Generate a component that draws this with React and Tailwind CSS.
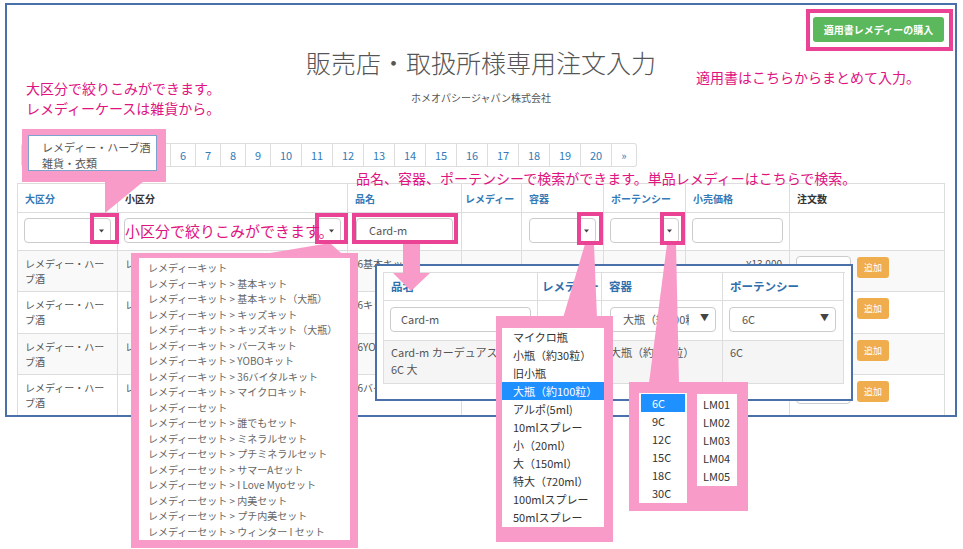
import React from "react";

const headers = [
  { label: "大区分", blue: true },
  { label: "小区分", blue: false },
  { label: "品名", blue: true },
  { label: "レメディー", blue: true },
  { label: "容器", blue: true },
  { label: "ポーテンシー", blue: true },
  { label: "小売価格", blue: true },
  { label: "注文数", blue: false },
];

const rows = [
  { sub: "レメディーキット", name: "36基本キット", price: "¥13,000" },
  { sub: "レメディーキット", name: "36キッズキット", price: "¥13,000" },
  { sub: "レメディーキット", name: "36YOBOキット", price: "¥13,000" },
  { sub: "レメディーキット", name: "36バイタルキット", price: "¥13,000" },
];

const subList = [
  "レメディーキット",
  "レメディーキット > 基本キット",
  "レメディーキット > 基本キット（大瓶）",
  "レメディーキット > キッズキット",
  "レメディーキット > キッズキット（大瓶）",
  "レメディーキット > バースキット",
  "レメディーキット > YOBOキット",
  "レメディーキット > 36バイタルキット",
  "レメディーキット > マイクロキット",
  "レメディーセット",
  "レメディーセット > 誰でもセット",
  "レメディーセット > ミネラルセット",
  "レメディーセット > プチミネラルセット",
  "レメディーセット > サマーAセット",
  "レメディーセット > I Love Myoセット",
  "レメディーセット > 内美セット",
  "レメディーセット > プチ内美セット",
  "レメディーセット > ウィンター I セット",
];

const containers = [
  "マイクロ瓶",
  "小瓶（約30粒）",
  "旧小瓶",
  "大瓶（約100粒）",
  "アルポ(5ml)",
  "10mlスプレー",
  "小（20ml）",
  "大（150ml）",
  "特大（720ml）",
  "100mlスプレー",
  "50mlスプレー",
];

const potencies = ["6C", "9C", "12C", "15C", "18C", "30C"];
const lms = ["LM01", "LM02", "LM03", "LM04", "LM05"];

const pages = ["«", "1", "2", "3", "4", "5", "6", "7", "8", "9", "10", "11", "12", "13", "14", "15", "16", "17", "18", "19", "20", "»"];

function Arrow() {
  return (
    <svg className="absolute right-[6px] top-[10px]" width="5" height="4" viewBox="0 0 5 4">
      <path d="M0 0.5h5L2.5 3.5z" fill="#444" />
    </svg>
  );
}

function Select({ className = "" }) {
  return <div className={`relative h-[25px] rounded-[4px] border border-[#ccc] bg-white ${className}`}><Arrow /></div>;
}

function Pagination() {
  return (
    <div className="ml-[4px] mt-[38px] flex h-[24px]">
      {pages.map((p, i) => (
        <div
          key={p}
          className={`flex h-[24px] items-center justify-center border-y border-r border-[#ddd] text-[11px] text-[#337ab7] ${
            p.length > 1 ? "w-[31px]" : "w-[25px]"
          } ${i === 0 ? "rounded-l-[3px] border-l" : ""} ${i === pages.length - 1 ? "rounded-r-[3px]" : ""}`}
        >
          {p}
        </div>
      ))}
    </div>
  );
}

function MainTable() {
  const cell = "border-b border-r border-[#ddd]";
  return (
    <div className="mt-[16px] grid grid-cols-[100px_230px_114px_60px_82px_82px_104px_155px] border-l border-t border-[#ddd] text-[10px] leading-[15px] text-[#555]">
      {headers.map((h) => (
        <div
          key={h.label}
          className={`${cell} flex h-[29px] items-center overflow-hidden whitespace-nowrap font-bold ${
            h.label === "レメディー" ? "px-[3px]" : "px-[7px]"
          } ${h.blue ? "text-[#337ab7]" : "text-[#333]"}`}
        >
          {h.label}
        </div>
      ))}
      <div className={`${cell} h-[38px] px-[6px] pt-[5px]`}><Select /></div>
      <div className={`${cell} h-[38px] px-[6px] pt-[5px]`}><Select /></div>
      <div className={`${cell} h-[38px] px-[8px] pt-[5px]`}>
        <div className="flex h-[25px] items-center rounded-[4px] border border-[#ccc] bg-white pl-[12px] text-[11px]">Card-m</div>
      </div>
      <div className={`${cell} h-[38px]`} />
      <div className={`${cell} h-[38px] px-[7px] pt-[5px]`}><Select /></div>
      <div className={`${cell} h-[38px] px-[6px] pt-[5px]`}><Select /></div>
      <div className={`${cell} h-[38px] px-[6px] pt-[5px]`}>
        <div className="h-[25px] rounded-[4px] border border-[#ccc] bg-white" />
      </div>
      <div className={`${cell} h-[38px]`} />
      {rows.map((r, i) => {
        const bg = i % 2 === 0 ? "bg-[#f9f9f9]" : "bg-white";
        return (
          <React.Fragment key={i}>
            <div className={`${cell} ${bg} ${i === 1 ? "h-[42px]" : "h-[41px]"} px-[7px] pt-[5px]`}>
              レメディー・ハー
              <br />
              ブ酒
            </div>
            <div className={`${cell} ${bg} whitespace-nowrap px-[7px] pt-[5px]`}>{r.sub}</div>
            <div className={`${cell} ${bg} overflow-hidden whitespace-nowrap px-[4px] pt-[5px]`}>{r.name}</div>
            <div className={`${cell} ${bg}`} />
            <div className={`${cell} ${bg}`} />
            <div className={`${cell} ${bg}`} />
            <div className={`${cell} ${bg} pr-[7px] pt-[5px] text-right`}>{r.price}</div>
            <div className={`${cell} ${bg} flex items-start gap-[6px] pl-[6px] pt-[5px]`}>
              <div className="h-[24px] w-[55px] rounded-[4px] border border-[#ccc] bg-white" />
              <div className="mt-[1px] flex h-[21px] w-[32px] items-center justify-center rounded-[3px] bg-[#f0ad4e] text-[9px] text-white">追加</div>
            </div>
          </React.Fragment>
        );
      })}
    </div>
  );
}

function Inset() {
  const cell = "border-b border-r border-[#ddd]";
  return (
    <div className="absolute left-[375px] top-[264px] h-[137px] w-[478px] border-2 border-[#4a70aa] bg-white px-[6px] pt-[6px]">
      <div className="grid grid-cols-[154px_64px_121px_121px] border-l border-t border-[#ddd] text-[11px] text-[#555]">
        {["品名", "レメディー", "容器", "ポーテンシー"].map((h) => (
          <div
            key={h}
            className={`${cell} flex h-[28px] items-center whitespace-nowrap text-[11.5px] font-bold text-[#2f6fab] ${
              h === "レメディー" ? "px-[4px]" : "px-[7px]"
            }`}
          >
            {h}
          </div>
        ))}
        <div className={`${cell} h-[40px] px-[6px] pt-[6px]`}>
          <div className="flex h-[25px] w-[141px] items-center rounded-[4px] border border-[#ccc] bg-white pl-[10px]">Card-m</div>
        </div>
        <div className={`${cell} h-[40px]`} />
        <div className={`${cell} h-[40px] pl-[8px] pt-[6px]`}>
          <div className="relative flex h-[25px] w-[106px] items-center rounded-[4px] border border-[#ccc] bg-white pl-[12px]">
            <span className="w-[66px] overflow-hidden whitespace-nowrap">大瓶（約100粒）</span>
            <span className="absolute right-[6px] top-[3px] text-[9px] text-[#444]">▼</span>
          </div>
        </div>
        <div className={`${cell} h-[40px] pl-[6px] pt-[6px]`}>
          <div className="relative flex h-[25px] w-[107px] items-center rounded-[4px] border border-[#ccc] bg-white pl-[12px]">
            6C
            <span className="absolute right-[6px] top-[3px] text-[9px] text-[#444]">▼</span>
          </div>
        </div>
        <div className={`${cell} h-[43px] overflow-hidden bg-[#f5f5f5] px-[7px] pt-[3px] leading-[17px]`}>
          <div className="whitespace-nowrap">Card-m カーデュアスマリアヌス</div>
          <div>6C 大</div>
        </div>
        <div className={`${cell} bg-[#f5f5f5]`} />
        <div className={`${cell} bg-[#f5f5f5] px-[8px] pt-[3px] leading-[17px]`}>大瓶（約100粒）</div>
        <div className={`${cell} bg-[#f5f5f5] px-[7px] pt-[3px] leading-[17px]`}>6C</div>
      </div>
    </div>
  );
}

export default function App() {
  const note = "absolute whitespace-nowrap text-[14px] leading-[20px] text-[#e0137f]";
  const outline = "absolute border-[4px] border-[#ea4396]";
  return (
    <div className="relative h-[549px] w-[963px] overflow-hidden bg-white font-['Noto_Sans_CJK_JP','Noto_Sans',sans-serif] text-[#555]">
      <div className="ml-[5px] mt-[3px] h-[414px] w-[952px] overflow-hidden border-2 border-[#4a70aa] px-[10px]">
        <div className="flex justify-end pr-[1px] pt-[12px]">
          <div className="flex h-[25px] w-[131px] items-center justify-center rounded-[3px] bg-[#5cb85c] text-[10px] font-bold text-white">
            適用書レメディーの購入
          </div>
        </div>
        <h1 className="mt-[4px] text-center text-[25px] font-light leading-[32px] text-[#555]">販売店・取扱所様専用注文入力</h1>
        <p className="mt-[13px] text-center text-[10px] leading-[14px] text-[#555]">ホメオパシージャパン株式会社</p>
        <Pagination />
        <MainTable />
      </div>

      <Inset />

      <svg className="pointer-events-none absolute left-0 top-0" width="963" height="549" viewBox="0 0 963 549">
        <g fill="#f99bc8">
          <polygon points="105,181 144,181 105,213" />
          <polygon points="330,243 264,254 342,254" />
          <polygon points="403,244 420,244 420,273 430,273 411,291 393,273 403,273" />
          <polygon points="585,244 594,244 597,318 563,318" />
          <polygon points="667,244 676,244 679,383 649,383" />
        </g>
      </svg>

      {/* 大区分 dropdown */}
      <div className="absolute left-[22px] top-[129px] h-[53px] w-[144px] bg-[#f99bc8]" />
      <div className="absolute left-[28px] top-[135px] h-[36px] w-[129px] overflow-hidden border border-[#7da2ce] bg-white pl-[13px] text-[11px] leading-[16px] text-[#555]">
        <div className="whitespace-nowrap pt-[3px]">レメディー・ハーブ酒</div>
        <div className="whitespace-nowrap">雑貨・衣類</div>
      </div>

      {/* 小区分 dropdown */}
      <div className="absolute left-[131px] top-[253px] h-[295px] w-[227px] bg-[#f99bc8]" />
      <div className="absolute left-[139px] top-[258px] h-[282px] w-[211px] bg-white pl-[9px] pt-[2px] text-[10px] leading-[15.5px] text-[#666]">
        {subList.map((s) => (
          <div key={s} className="whitespace-nowrap">{s}</div>
        ))}
      </div>

      {/* 容器 dropdown */}
      <div className="absolute left-[496px] top-[316px] h-[226px] w-[117px] bg-[#f99bc8]" />
      <div className="absolute left-[502px] top-[328px] h-[199px] w-[102px] bg-white text-[11px] leading-[18px] text-[#333]">
        {containers.map((c, i) => (
          <div key={c} className={`whitespace-nowrap pl-[11px] ${i === 3 ? "bg-[#1e90ff] text-white" : ""}`}>
            {c}
          </div>
        ))}
      </div>

      {/* ポーテンシー dropdown */}
      <div className="absolute left-[629px] top-[382px] h-[129px] w-[119px] bg-[#f99bc8]" />
      <div className="absolute left-[639px] top-[393px] h-[110px] w-[48px] bg-white px-[2px] pt-[1px] text-[11px] leading-[18px] text-[#333]">
        {potencies.map((p, i) => (
          <div key={p} className={`pl-[11px] ${i === 0 ? "bg-[#1e90ff] text-white" : ""}`}>
            {p}
          </div>
        ))}
      </div>
      <div className="absolute left-[697px] top-[394px] h-[92px] w-[40px] bg-white pl-[6px] pt-[1px] text-[11px] leading-[18px] text-[#333]">
        {lms.map((l) => (
          <div key={l}>{l}</div>
        ))}
      </div>

      {/* outlines */}
      <div className={`${outline} left-[806px] top-[9px] h-[42px] w-[147px]`} />
      <div className={`${outline} left-[90px] top-[213px] h-[31px] w-[29px]`} />
      <div className={`${outline} left-[315px] top-[213px] h-[31px] w-[33px]`} />
      <div className={`${outline} left-[352px] top-[213px] h-[31px] w-[106px]`} />
      <div className={`${outline} left-[577px] top-[212px] h-[33px] w-[26px]`} />
      <div className={`${outline} left-[660px] top-[212px] h-[33px] w-[25px]`} />

      {/* notes */}
      <div className={`${note} left-[26px] top-[78px]`}>
        大区分で絞りこみができます。
        <br />
        レメディーケースは雑貨から。
      </div>
      <div className={`${note} left-[696px] top-[67px]`}>適用書はこちらからまとめて入力。</div>
      <div className={`${note} left-[356px] top-[168px]`}>品名、容器、ポーテンシーで検索ができます。単品レメディーはこちらで検索。</div>
      <div className={`${note} left-[125px] top-[221px] text-[15px]`}>小区分で絞りこみができます。</div>
    </div>
  );
}
